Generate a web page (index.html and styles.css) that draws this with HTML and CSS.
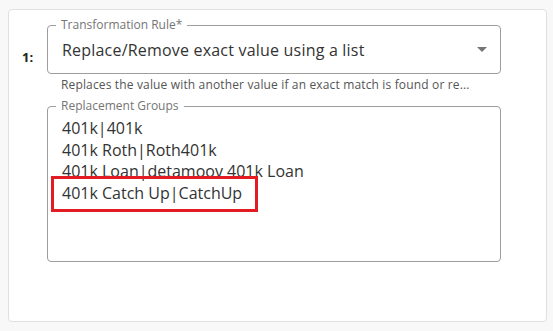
FILE: index.html
```html
<!DOCTYPE html>
<html lang="en">
<head>
    <meta charset="UTF-8">
    <meta name="viewport" content="width=device-width, initial-scale=1.0">
    <title>Transformation Rule</title>
    <link rel="stylesheet" href="styles.css">
</head>
<body>

    <div class="rule-card">
        <div class="rule-row">
            <div class="rule-index">1:</div>
            <div class="rule-fields">
                <fieldset class="outlined select-field">
                    <legend>Transformation Rule*</legend>
                    <div class="select-value">Replace/Remove exact value using a list</div>
                    <span class="select-arrow"></span>
                </fieldset>
                <div class="helper-text">Replaces the value with another value if an exact match is found or re...</div>

                <fieldset class="outlined groups-field">
                    <legend>Replacement Groups</legend>
                    <div class="groups-list">
                        <div>401k|401k</div>
                        <div>401k Roth|Roth401k</div>
                        <div>401k Loan|detamoov 401k Loan</div>
                        <div>401k Catch Up|CatchUp</div>
                    </div>
                    <div class="highlight-box"></div>
                </fieldset>
            </div>
        </div>
    </div>

</body>
</html>
```

FILE: styles.css
```css
body {
    font-family: 'Open Sans', sans-serif;
    background-color: #f8f8f8;
    color: #333;
    margin: 0;
    padding: 9px 6px 0 8px;
}

.rule-card {
    background-color: #fff;
    border: 1px solid #e0e0e0;
    border-radius: 4px;
    box-sizing: border-box;
    height: 313px;
    padding-top: 10px;
}

.rule-row {
    display: flex;
}

.rule-index {
    width: 38px;
    padding-left: 13px;
    box-sizing: border-box;
    padding-top: 28px;
    font-size: 13px;
    font-weight: 700;
    color: #222;
}

.rule-fields {
    width: 454px;
}

.outlined {
    margin: 0;
    border: 1px solid #9e9e9e;
    border-radius: 4px;
    padding: 0 14px;
    position: relative;
}

.outlined legend {
    margin-left: -6px;
    padding: 0 5px;
    font-size: 12px;
    line-height: 10px;
    color: #757575;
}

.select-field {
    height: 54px;
    box-sizing: border-box;
    display: flex;
    align-items: center;
    justify-content: space-between;
    padding-bottom: 4px;
}

.select-value {
    font-size: 16px;
    letter-spacing: 0.2px;
}

.select-arrow {
    width: 0;
    height: 0;
    border-left: 5px solid transparent;
    border-right: 5px solid transparent;
    border-top: 5px solid #757575;
    margin-right: -1px;
}

.helper-text {
    font-size: 12px;
    letter-spacing: 0.15px;
    color: #555;
    padding: 2px 14px 0;
    line-height: 18px;
}

.groups-field {
    margin-top: 7px;
    height: 161px;
    box-sizing: border-box;
}

.groups-list {
    font-size: 16px;
    line-height: 21.7px;
    padding-top: 7px;
}

.highlight-box {
    position: absolute;
    left: 3px;
    top: 65px;
    width: 207px;
    height: 36px;
    border: 3px solid #e31b23;
    box-sizing: border-box;
}
```
